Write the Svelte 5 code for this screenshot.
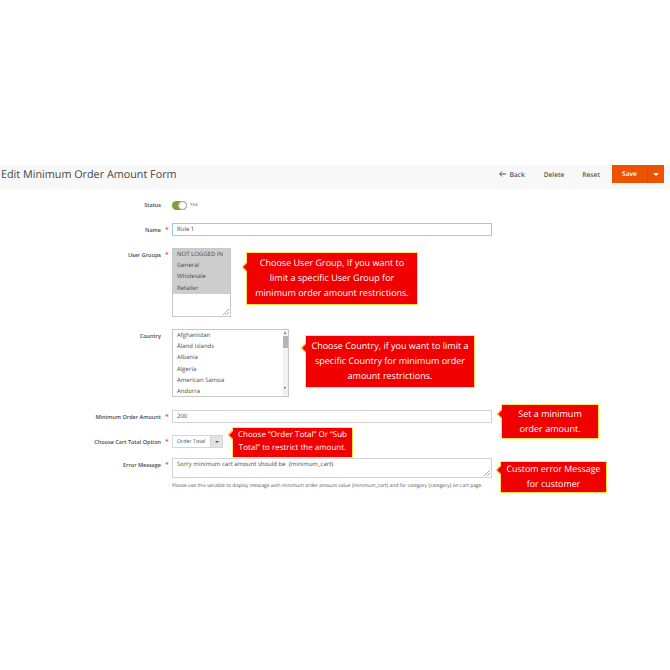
<script lang="ts">
  const groups = ['NOT LOGGED IN', 'General', 'Wholesale', 'Retailer'];
  const countries = ['Afghanistan', 'Åland Islands', 'Albania', 'Algeria', 'American Samoa', 'Andorra'];
</script>

<main>
  <header>
    <h1>Edit Minimum Order Amount Form</h1>
    <nav>
      <span class="link back">
        <svg width="7" height="6" viewBox="0 0 7 6"><path d="M3 .5 .7 3 3 5.5M.7 3H7" fill="none" stroke="#555" stroke-width="1" /></svg>
        Back
      </span>
      <span class="link del">Delete</span>
      <span class="link last">Reset</span>
      <span class="save">
        <span class="save-label">Save</span>
        <span class="save-arrow"><i></i></span>
      </span>
    </nav>
  </header>

  <form>
    <div class="row status">
      <div class="label">Status</div>
      <div class="star"></div>
      <div class="toggle-wrap"><span class="toggle"><i></i></span><span class="yes">Yes</span></div>
    </div>

    <div class="row name">
      <div class="label">Name</div>
      <div class="star">*</div>
      <div class="input focus">Rule 1</div>
    </div>

    <div class="row groups">
      <div class="label">User Groups</div>
      <div class="star">*</div>
      <div class="multi">
        {#each groups as g}
          <div class="opt sel">{g}</div>
        {/each}
        <svg class="grip" width="6" height="6" viewBox="0 0 6 6"><path d="M0 6 6 0M3 6 6 3" stroke="#888" stroke-width=".7" /></svg>
      </div>
    </div>

    <div class="row country">
      <div class="label">Country</div>
      <div class="star"></div>
      <div class="list">
        {#each countries as c}
          <div class="opt">{c}</div>
        {/each}
        <div class="scrollbar">
          <span class="up"></span>
          <span class="thumb"></span>
          <span class="down"></span>
        </div>
      </div>
    </div>

    <div class="row amount">
      <div class="label">Minimum Order Amount</div>
      <div class="star">*</div>
      <div class="input">200</div>
    </div>

    <div class="row option">
      <div class="label">Choose Cart Total Option</div>
      <div class="star">*</div>
      <div class="select"><span class="select-val">Order Total</span><span class="select-btn"><i></i></span></div>
    </div>

    <div class="row error">
      <div class="label">Error Message</div>
      <div class="star">*</div>
      <div class="area">
        Sorry minimum cart amount should be &nbsp;{'{minimum_cart}'}
        <svg class="grip" width="6" height="6" viewBox="0 0 6 6"><path d="M0 6 6 0M3 6 6 3" stroke="#888" stroke-width=".7" /></svg>
      </div>
    </div>

    <div class="note">Please use this variable to display message with minimum order amount value {'{minimum_cart}'} and for category {'{category}'} on cart page.</div>

    <div class="tip t1">Choose User Group, If you want to<br />limit a specific User Group for<br />minimum order amount restrictions.</div>
    <div class="tip t2">Choose Country, if you want to limit a<br />specific Country for minimum order<br />amount restrictions.</div>
    <div class="tip t3">Set a minimum<br />order amount.</div>
    <div class="tip t4">Choose “Order Total” Or “Sub<br />Total” to restrict the amount.</div>
    <div class="tip t5">Custom error Message<br />for customer</div>
  </form>
</main>

<style>
  :global(body) {
    margin: 0;
    background: #fff;
  }
  main {
    width: 670px;
    height: 670px;
    padding-top: 165px;
    box-sizing: border-box;
    font-family: 'Open Sans', sans-serif;
    color: #4a4a4a;
    overflow: hidden;
    text-rendering: geometricPrecision;
  }

  header {
    height: 24px;
    box-sizing: border-box;
    background: #f8f8f8;
    display: flex;
    align-items: center;
    justify-content: space-between;
    padding: 0 6px 6px 1px;
    margin-bottom: 9px;
  }
  h1 {
    margin: 0;
    font-size: 10.8px;
    font-weight: 400;
    color: #444;
  }
  nav {
    display: flex;
    align-items: center;
    font-size: 6.6px;
    font-weight: 600;
    color: #555;
  }
  .link {
    margin-right: 19px;
  }
  .link.del {
    margin-right: 18px;
  }
  .link.last {
    margin-right: 12px;
  }
  .back {
    display: flex;
    align-items: center;
    gap: 3px;
  }
  .save {
    display: flex;
    height: 18px;
    background: #eb5202;
    color: #fff;
  }
  .save-label {
    width: 35px;
    text-align: center;
    line-height: 17px;
    border-right: 1px solid #c9500f;
  }
  .save-arrow {
    width: 16px;
    display: flex;
    align-items: center;
    justify-content: center;
  }
  .save-arrow i {
    border-top: 3.5px solid #fff;
    border-left: 3px solid transparent;
    border-right: 3px solid transparent;
  }

  form {
    position: relative;
    width: 492px;
    font-size: 6px;
  }
  .row {
    display: grid;
    grid-template-columns: 161px 11px 1fr;
    align-items: start;
  }
  .label {
    text-align: right;
    font-size: 5.5px;
    font-weight: 600;
    color: #4a4a4a;
    line-height: 14px;
  }
  .star {
    color: #e22626;
    font-size: 7px;
    line-height: 15px;
    padding-left: 4px;
  }

  .status {
    height: 14px;
  }
  .toggle-wrap {
    display: flex;
    align-items: center;
    gap: 3px;
    height: 14px;
    color: #5a5a5a;
    font-size: 5px;
  }
  .toggle {
    position: relative;
    width: 15px;
    height: 9px;
    border-radius: 4.5px;
    background: #79a22e;
  }
  .toggle i {
    position: absolute;
    right: 0;
    top: 0;
    width: 9px;
    height: 9px;
    box-sizing: border-box;
    border-radius: 50%;
    background: #fff;
    border: 1px solid #aaa;
  }

  .name {
    margin-top: 11px;
    height: 14px;
  }
  .input {
    height: 13px;
    border: 1px solid #d4d4d4;
    box-sizing: border-box;
    padding-left: 4px;
    line-height: 11px;
  }
  .focus {
    border-color: #a8c8e0;
  }

  .groups {
    margin-top: 11px;
  }
  .multi {
    position: relative;
    width: 59px;
    height: 69px;
    box-sizing: border-box;
    border: 1px solid #c8c8c8;
  }
  .opt {
    height: 11.2px;
    line-height: 11.2px;
    padding-left: 4px;
  }
  .sel {
    background: #cdcdcd;
  }
  .grip {
    position: absolute;
    right: 1px;
    bottom: 1px;
  }

  .country {
    margin-top: 12px;
  }
  .list {
    position: relative;
    width: 117px;
    height: 68px;
    box-sizing: border-box;
    border: 1px solid #c8c8c8;
  }
  .scrollbar {
    position: absolute;
    right: 0;
    top: 0;
    bottom: 0;
    width: 5px;
    background: #f1f1f1;
  }
  .scrollbar span {
    position: absolute;
    left: 0;
  }
  .up,
  .down {
    left: 1px !important;
    border-left: 1.5px solid transparent;
    border-right: 1.5px solid transparent;
  }
  .up {
    top: 2px;
    border-bottom: 2px solid #444;
  }
  .down {
    bottom: 7px;
    border-top: 2px solid #444;
  }
  .thumb {
    top: 6px;
    width: 5px;
    height: 12px;
    background: #b5b5b5;
  }

  .amount {
    margin-top: 13px;
    height: 14px;
  }
  .option {
    margin-top: 11px;
    height: 14px;
  }
  .select {
    display: flex;
    width: 51px;
    height: 13px;
    box-sizing: border-box;
    border: 1px solid #d4d4d4;
  }
  .select-val {
    flex: 1;
    padding-left: 4px;
    line-height: 11px;
    font-size: 5.3px;
    white-space: nowrap;
  }
  .select-btn {
    width: 11px;
    background: #e3e3e3;
    display: flex;
    align-items: center;
    justify-content: center;
    border-left: 1px solid #d4d4d4;
  }
  .select-btn i {
    border-top: 2px solid #555;
    border-left: 2px solid transparent;
    border-right: 2px solid transparent;
  }

  .error {
    margin-top: 9px;
  }
  .area {
    position: relative;
    height: 20px;
    box-sizing: border-box;
    border: 1px solid #d4d4d4;
    padding-left: 4px;
    line-height: 11px;
  }
  .note {
    margin: 4px 0 0 172px;
    white-space: nowrap;
    font-size: 4.9px;
    line-height: 9px;
    color: #555;
  }

  .tip {
    position: absolute;
    box-sizing: border-box;
    background: #f00000;
    border: 1.5px solid #ffe44d;
    color: #fff;
    text-align: center;
    font-size: 9px;
    line-height: 15px;
    white-space: nowrap;
    display: flex;
    align-items: center;
    justify-content: center;
    padding-bottom: 2px;
  }
  .tip::before {
    content: '';
    position: absolute;
    left: -4px;
    width: 5px;
    height: 5px;
    background: #f00000;
    border-left: 1.5px solid #ffe44d;
    border-bottom: 1.5px solid #ffe44d;
    transform: rotate(45deg);
  }
  .t1 {
    left: 246px;
    top: 54px;
    width: 172px;
    height: 53px;
  }
  .t1::before {
    top: 11px;
  }
  .t2 {
    left: 305px;
    top: 137px;
    width: 170px;
    height: 53px;
  }
  .t2::before {
    top: 9px;
  }
  .t3 {
    left: 501px;
    top: 206px;
    width: 98px;
    height: 35px;
  }
  .t3::before {
    top: 6px;
  }
  .t4 {
    left: 232px;
    top: 229px;
    width: 121px;
    height: 31px;
    line-height: 13px;
    font-size: 8px;
    padding-bottom: 3px;
  }
  .t4::before {
    top: 4px;
  }
  .t5 {
    left: 500px;
    top: 263px;
    width: 107px;
    height: 32px;
    font-size: 8.9px;
  }
  .t5::before {
    top: 5px;
  }
</style>
